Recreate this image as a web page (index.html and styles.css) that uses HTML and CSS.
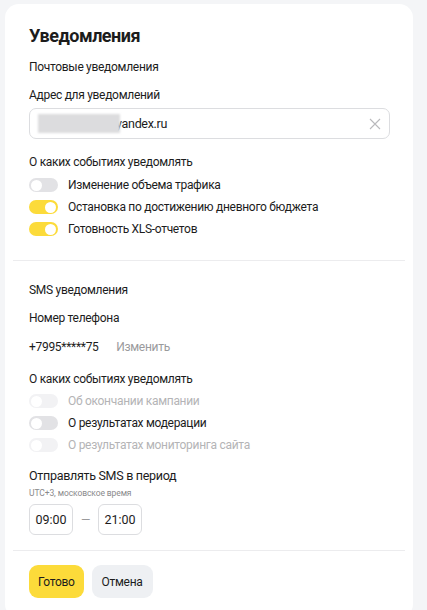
FILE: index.html
```html
<!DOCTYPE html>
<html>
<head>
    <meta charset="utf-8">
    <title>Уведомления</title>
    <link rel="stylesheet" href="styles.css">
</head>
<body>
    <div class="card">
        <div class="section">
            <h2 class="title">Уведомления</h2>
            <div class="subtitle">Почтовые уведомления</div>
            <div class="label">Адрес для уведомлений</div>
            <div class="input">
                <span class="mask"></span><span class="email">yandex.ru</span>
                <svg class="clear" width="12" height="12" viewBox="0 0 12 12">
                    <path d="M1 1 L11 11 M11 1 L1 11" stroke="#b9b9bc" stroke-width="1.1" fill="none"/>
                </svg>
            </div>

            <div class="label events">О каких событиях уведомлять</div>
            <div class="toggles">
                <div class="row"><span class="toggle"></span>Изменение объема трафика</div>
                <div class="row"><span class="toggle on"></span>Остановка по достижению дневного бюджета</div>
                <div class="row"><span class="toggle on"></span>Готовность XLS-отчетов</div>
            </div>
        </div>

        <div class="divider"></div>

        <div class="section">
            <div class="subtitle sms">SMS уведомления</div>
            <div class="label">Номер телефона</div>
            <div class="phone">+7995*****75 <span class="change">Изменить</span></div>

            <div class="label events">О каких событиях уведомлять</div>
            <div class="toggles sms-toggles">
                <div class="row disabled"><span class="toggle"></span>Об окончании кампании</div>
                <div class="row"><span class="toggle"></span>О результатах модерации</div>
                <div class="row disabled"><span class="toggle"></span>О результатах мониторинга сайта</div>
            </div>

            <div class="period">Отправлять SMS в период</div>
            <div class="hint">UTC+3, московское время</div>
            <div class="times">
                <div class="time">09:00</div>
                <span class="dash">—</span>
                <div class="time">21:00</div>
            </div>
        </div>

        <div class="divider bottom"></div>

        <div class="section buttons">
            <button class="btn primary">Готово</button>
            <button class="btn">Отмена</button>
        </div>
    </div>
</body>
</html>
```

FILE: styles.css
```css
body {
    margin: 0;
    background-color: #f4f5f7;
    font-family: Roboto, "Noto Sans", sans-serif;
    font-size: 12px;
    letter-spacing: -0.3px;
    color: #1c1c1c;
    overflow: hidden;
}

.card {
    width: 408px;
    margin: 4px 0 0 5px;
    padding-top: 20px;
    padding-bottom: 20px;
    background-color: #fff;
    border-radius: 14px;
}

.section {
    padding: 0 24px;
}

.title {
    margin: 0;
    font-size: 18px;
    line-height: 24px;
    font-weight: 700;
    letter-spacing: -0.5px;
}

.subtitle {
    margin-top: 10px;
    line-height: 18px;
}

.subtitle.sms {
    margin-top: 20px;
}

.label {
    margin-top: 10px;
    line-height: 18px;
}

.label.events {
    margin-top: 14px;
}

.input {
    display: flex;
    align-items: center;
    width: 361px;
    height: 31px;
    margin-top: 4px;
    padding: 0 8px;
    box-sizing: border-box;
    border: 1px solid #dcdde0;
    border-radius: 7px;
    font-size: 12.5px;
}

.mask {
    position: relative;
    z-index: 1;
    display: inline-block;
    width: 82px;
    height: 19px;
    background-color: #dcdcde;
    filter: blur(1.2px);
}

.email {
    margin-left: -4px;
}

.clear {
    margin-left: auto;
}

.toggles {
    margin-top: 3px;
}

.sms-toggles {
    margin-top: 2px;
}

.row {
    display: flex;
    align-items: center;
    height: 22px;
}

.toggle {
    position: relative;
    width: 29px;
    height: 14px;
    margin-right: 10px;
    border-radius: 7px;
    background-color: #e2e2e5;
}

.toggle::after {
    content: "";
    position: absolute;
    top: 1.5px;
    left: 2px;
    width: 11px;
    height: 11px;
    border-radius: 50%;
    background-color: #fff;
}

.toggle.on {
    background-color: #fcdb3a;
}

.toggle.on::after {
    left: auto;
    right: 2px;
}

.row.disabled {
    color: #b4b4b6;
}

.row.disabled .toggle {
    background-color: #f2f2f4;
}

.divider {
    height: 1px;
    margin: 20px 8px 0;
    background-color: #ececee;
}

.divider.bottom {
    margin-top: 15px;
}

.phone {
    margin-top: 11px;
    line-height: 18px;
}

.change {
    margin-left: 15px;
    color: #9a9a9c;
}

.period {
    margin-top: 11px;
    font-size: 12.5px;
    line-height: 18px;
}

.hint {
    margin-top: 3px;
    font-size: 8.5px;
    line-height: 11px;
    letter-spacing: -0.1px;
    color: #8a8a8c;
}

.times {
    display: flex;
    align-items: center;
    margin-top: 5px;
}

.time {
    width: 44px;
    height: 31px;
    box-sizing: border-box;
    border: 1px solid #dcdde0;
    border-radius: 6px;
    display: flex;
    align-items: center;
    justify-content: center;
    font-size: 12.5px;
    letter-spacing: 0;
}

.dash {
    margin: 0 8px;
    color: #9a9a9c;
}

.buttons {
    display: flex;
    gap: 8px;
    margin-top: 14px;
}

.btn {
    height: 33px;
    padding: 0 9px;
    border: none;
    border-radius: 9px;
    background-color: #eef0f3;
    font-family: Roboto, "Noto Sans", sans-serif;
    font-size: 12px;
    letter-spacing: -0.3px;
    color: #1c1c1c;
}

.btn.primary {
    background-color: #fcdb3a;
}

.btn + .btn {
    padding: 0 10px;
}
```
